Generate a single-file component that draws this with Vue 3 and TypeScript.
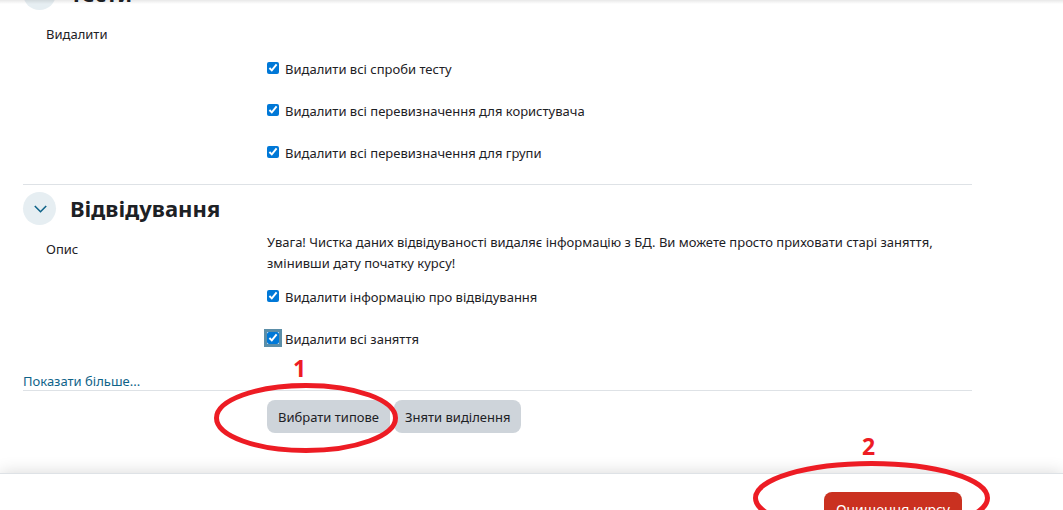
<script setup lang="ts">
import { ref } from 'vue'

interface Option {
  id: string
  label: string
  checked: boolean
  focused?: boolean
}

const quizOptions = ref<Option[]>([
  { id: 'quiz-attempts', label: 'Видалити всі спроби тесту', checked: true },
  { id: 'quiz-user', label: 'Видалити всі перевизначення для користувача', checked: true },
  { id: 'quiz-group', label: 'Видалити всі перевизначення для групи', checked: true },
])

const attendanceOptions = ref<Option[]>([
  { id: 'att-log', label: 'Видалити інформацію про відвідування', checked: true },
  { id: 'att-sessions', label: 'Видалити всі заняття', checked: true, focused: true },
])
</script>

<template>
  <div class="page">
    <form id="reset-form" class="form" @submit.prevent>
      <section class="section scrolled">
        <header class="heading">
          <button type="button" class="toggle" aria-label="Тести">
            <svg width="14" height="14" viewBox="0 0 14 14"><path d="M1.8 4 L7.5 9.7 L13.2 4" /></svg>
          </button>
          <h3>Тести</h3>
        </header>
        <div class="row">
          <div class="name">Видалити</div>
        </div>
        <div class="options first">
          <div v-for="o in quizOptions" :key="o.id" class="option">
            <input :id="o.id" v-model="o.checked" type="checkbox" />
            <label :for="o.id">{{ o.label }}</label>
          </div>
        </div>
      </section>

      <section class="section ruled">
        <header class="heading">
          <button type="button" class="toggle" aria-label="Відвідування">
            <svg width="14" height="14" viewBox="0 0 14 14"><path d="M1.8 4 L7.5 9.7 L13.2 4" /></svg>
          </button>
          <h3>Відвідування</h3>
        </header>
        <div class="row">
          <div class="name">Опис</div>
          <p class="text">Увага! Чистка даних відвідуваності видаляє інформацію з БД. Ви можете просто приховати старі заняття, змінивши дату початку курсу!</p>
        </div>
        <div class="options">
          <div v-for="o in attendanceOptions" :key="o.id" class="option">
            <input :id="o.id" v-model="o.checked" type="checkbox" :class="{ focused: o.focused }" />
            <label :for="o.id">{{ o.label }}</label>
          </div>
        </div>
        <a href="#" class="more">Показати більше...</a>
      </section>

      <div class="actions">
        <button type="button" class="btn">Вибрати типове</button>
        <button type="button" class="btn">Зняти виділення</button>
      </div>
    </form>

    <footer class="footer">
      <button type="submit" form="reset-form" class="btn danger">Очищення курсу</button>
    </footer>

    <div class="topshade"></div>
    <div class="mark one">
      <span>1</span>
      <svg width="184" height="70" viewBox="0 0 184 70"><ellipse cx="92" cy="35" rx="89.5" ry="32.5" /></svg>
    </div>
    <div class="mark two">
      <span>2</span>
      <svg width="237" height="74" viewBox="0 0 237 74"><ellipse cx="118.5" cy="37" rx="116" ry="34.5" /></svg>
    </div>
  </div>
</template>

<style>
body {
  margin: 0;
  background: #fff;
}
</style>

<style scoped>
.page {
  position: relative;
  height: 100vh;
  overflow: hidden;
  font-family: "Noto Sans", "Open Sans", sans-serif;
  font-size: 13px;
  line-height: 21px;
  color: #1d2125;
}
.form {
  padding: 0 91px 0 23px;
}
.section {
  box-sizing: border-box;
}
.scrolled {
  margin-top: -23px;
  padding-bottom: 20px;
}
.ruled {
  border-top: 1px solid #dee2e6;
  padding-top: 7px;
}
.heading {
  display: flex;
  align-items: center;
  gap: 14px;
}
.toggle {
  width: 33px;
  height: 33px;
  padding: 0;
  border: 0;
  border-radius: 50%;
  background: #e6eef2;
  display: flex;
  align-items: center;
  justify-content: center;
}
.toggle svg {
  fill: none;
  stroke: #0f6389;
  stroke-width: 1.6;
}
h3 {
  margin: 0;
  font-size: 22px;
  line-height: 33px;
  font-weight: 700;
}
.row {
  display: grid;
  grid-template-columns: 244px 1fr;
  padding-top: 7px;
}
.name {
  padding: 7px 0 0 23px;
}
.text {
  margin: 0;
}
.options {
  padding: 13px 0 0 244px;
  display: flex;
  flex-direction: column;
  gap: 21px;
}
.options.first {
  padding-top: 14px;
}
.option {
  display: flex;
  align-items: center;
}
.option input {
  width: 12px;
  height: 12px;
  margin: 0 6px 3px 0;
  accent-color: #0078d7;
}
.option input.focused {
  outline: 3px solid #5b8ea8;
  outline-offset: 0;
}
.more {
  display: block;
  margin-top: 22px;
  line-height: 18px;
  color: #0f6389;
  text-decoration: none;
}
.actions {
  border-top: 1px solid #dee2e6;
  padding: 9px 0 0 244px;
  display: flex;
  gap: 4px;
}
.btn {
  box-sizing: border-box;
  height: 33px;
  padding: 1px 11px 0;
  border: 0;
  border-radius: 8px;
  background: #ced4da;
  color: #1d2125;
  font: inherit;
}
.footer {
  margin-top: 40px;
  border-top: 1px solid #dee2e6;
  padding: 18px 101px 18px 23px;
  display: flex;
  justify-content: flex-end;
  box-shadow: 0 0 16px rgba(0, 0, 0, 0.16);
  background: #fff;
}
.danger {
  padding: 1px 12px 0;
  background: #ca3120;
  color: #fff;
  font-size: 14px;
}
.topshade {
  position: absolute;
  inset: 0 0 auto;
  height: 4px;
  background: linear-gradient(rgba(0, 0, 0, 0.09), rgba(0, 0, 0, 0));
}
.mark {
  position: absolute;
  color: #ed1c24;
  pointer-events: none;
}
.mark span {
  display: block;
  padding-left: 79px;
  font: 700 23px/30px "Open Sans", sans-serif;
}
.mark.two span {
  padding-left: 109px;
}
.mark svg {
  display: block;
  fill: none;
  stroke: #ed1c24;
  stroke-width: 5;
}
.one {
  left: 214px;
  top: 353px;
}
.two {
  left: 753px;
  top: 431px;
}
</style>
